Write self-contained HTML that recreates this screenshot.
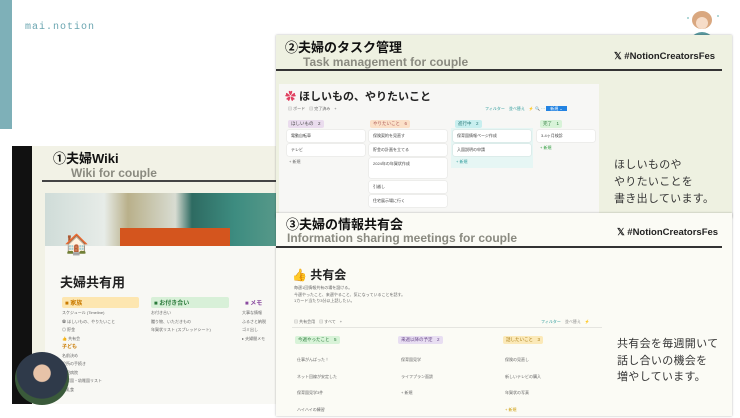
<!DOCTYPE html>
<html><head><meta charset="utf-8"><style>
*{margin:0;padding:0;box-sizing:border-box}
body{width:740px;height:416px;overflow:hidden;background:#fff;position:relative;font-family:"Liberation Sans","Noto Sans CJK JP",sans-serif;color:#222}
.a{position:absolute}
.s{font-size:4px;color:#666;white-space:nowrap}
.tag{font-size:4.5px;padding:1px 3px;border-radius:2px;white-space:nowrap}
.card{position:absolute;background:#fff;border-radius:2px;box-shadow:0 0 1px rgba(0,0,0,.25);font-size:4px;color:#444;padding:3px 4px;white-space:nowrap}
</style></head><body>
<div class="a" style="left:0;top:0;width:12px;height:129px;background:#7eb0b8"></div>
<div class="a" style="left:25px;top:22px;font-size:10px;color:#6aa5b0;letter-spacing:1px;font-family:'Liberation Mono',monospace">mai.notion</div>
<svg class="a" style="left:680px;top:8px" width="50" height="30"><ellipse cx="22" cy="12" rx="10" ry="9" fill="#d9a77f"/><ellipse cx="22" cy="15" rx="6" ry="6" fill="#f6dcc8"/><path d="M10 30 Q22 18 34 30Z" fill="#5b9aa0"/><circle cx="8" cy="10" r="1" fill="#9cc"/><circle cx="38" cy="8" r="1" fill="#9cc"/></svg>

<!-- Slide 1 -->
<div class="a" style="left:12px;top:146px;width:270px;height:258px;background:#111"></div>
<div class="a" style="left:32px;top:146px;width:250px;height:258px;background:#f2f2e6"></div>
<div class="a" style="left:53px;top:148px;font-size:13px;font-weight:bold;color:#111">①夫婦Wiki</div>
<div class="a" style="left:71px;top:166px;font-size:12px;font-weight:bold;color:#8a8a80">Wiki for couple</div>
<div class="a" style="left:42px;top:180px;width:240px;height:2px;background:#444"></div>
<div class="a" style="left:45px;top:193px;width:237px;height:54px;background:linear-gradient(90deg,#cfdcd8 0,#e7ece8 25%,#b9b08a 35%,#d8dcd2 55%,#2e6b62 62%,#3d8c80 80%,#5a9a8a 100%)"></div>
<div class="a" style="left:120px;top:228px;width:110px;height:18px;background:#d4551e"></div>
<div class="a" style="left:45px;top:246px;width:237px;height:158px;background:#f8f8f4"></div>
<div class="a" style="left:64px;top:232px;font-size:20px">🏠</div>
<div class="a" style="left:60px;top:272px;font-size:13px;font-weight:bold">夫婦共有用</div>
<div class="a tag" style="left:62px;top:297px;width:77px;background:#fde6b0;color:#c97a00;font-weight:bold;font-size:6px">■ 家族</div>
<div class="a tag" style="left:151px;top:297px;width:78px;background:#d8f0d8;color:#2a7a3a;font-weight:bold;font-size:6px">■ お付き合い</div>
<div class="a tag" style="left:242px;top:297px;width:40px;color:#8a4aa0;font-weight:bold;font-size:6px">■ メモ</div>
<div class="a s" style="left:62px;top:309px;line-height:8.5px">スケジュール (Timeline)<br>✿ ほしいもの、やりたいこと<br>◎ 貯金<br>👍 共有会<br><b style="color:#c97a00;font-size:5px">子ども</b><br>名前決め<br>役所の手続き<br>小児病院<br>保育園・幼稚園リスト<br>離乳食</div>
<div class="a s" style="left:151px;top:309px;line-height:8.5px">お付き合い<br>贈り物、いただきもの<br>年賀状リスト (スプレッドシート)</div>
<div class="a s" style="left:242px;top:309px;line-height:8.5px">大事な情報<br>ふるさと納税<br>ゴミ出し<br>▸ 夫婦間メモ</div>
<div class="a" style="left:15px;top:352px;width:54px;height:53px;border-radius:50%;background:radial-gradient(circle at 50% 40%,#e7c3a8 0 20%,#2f3a4a 22% 60%,#3a5a3a 62%)"></div>

<!-- Slide 2 -->
<div class="a" style="left:276px;top:35px;width:456px;height:183px;background:#eef1e1;box-shadow:0 0 2px rgba(0,0,0,.3)"></div>
<div class="a" style="left:285px;top:37px;font-size:13px;font-weight:bold;color:#111">②夫婦のタスク管理</div>
<div class="a" style="left:303px;top:55px;font-size:12px;font-weight:bold;color:#8a8a80">Task management for couple</div>
<div class="a" style="left:276px;top:69px;width:446px;height:2px;background:#333"></div>
<div class="a" style="left:614px;top:51px;font-size:9.5px;font-weight:bold;color:#222">𝕏 #NotionCreatorsFes</div>
<div class="a" style="left:279px;top:84px;width:320px;height:134px;background:#f7f7f5"></div>
<div class="a" style="left:285px;top:88px;font-size:11px;font-weight:bold;color:#222"><span style="color:#e04060">✿</span> ほしいもの、やりたいこと</div>
<div class="a s" style="left:288px;top:106px">▤ ボード　▤ 完了済み　+</div>
<div class="a s" style="left:485px;top:106px;color:#2a9a9a">フィルター　並べ替え　⚡ 🔍 ··· <span style="background:#2383e2;color:#fff;padding:0 4px">新規 ⌄</span></div>
<div class="a tag" style="left:288px;top:120px;background:#eadcee;color:#444">ほしいもの　2</div>
<div class="a tag" style="left:370px;top:120px;background:#fbe0c8;color:#a55">やりたいこと　6</div>
<div class="a tag" style="left:455px;top:120px;background:#c8efef;color:#2a7a7a">進行中　2</div>
<div class="a tag" style="left:540px;top:120px;background:#d8f3d8;color:#2a7a3a">完了　1</div>
<div class="card" style="left:287px;top:130px;width:78px">電動自転車</div>
<div class="card" style="left:287px;top:144px;width:78px">テレビ</div>
<div class="a s" style="left:289px;top:159px">+ 新規</div>
<div class="card" style="left:369px;top:130px;width:78px">保険契約を見直す</div>
<div class="card" style="left:369px;top:144px;width:78px">貯金の計画を立てる</div>
<div class="card" style="left:369px;top:158px;width:78px;height:20px">2024年の年賀状作成</div>
<div class="card" style="left:369px;top:181px;width:78px">引越し</div>
<div class="card" style="left:369px;top:195px;width:78px">住宅展示場に行く</div>
<div class="a" style="left:451px;top:128px;width:82px;height:40px;background:#e6f6f4"></div>
<div class="card" style="left:453px;top:130px;width:78px">保育園情報ページ作成</div>
<div class="card" style="left:453px;top:144px;width:78px">入園説明の申請</div>
<div class="a s" style="left:456px;top:159px;color:#2a9a9a">+ 新規</div>
<div class="card" style="left:537px;top:130px;width:58px">3-4ヶ月検診</div>
<div class="a s" style="left:540px;top:145px;color:#2a9a3a">+ 新規</div>
<div class="a" style="left:614px;top:157px;font-size:11px;letter-spacing:0.3px;line-height:17px;color:#333">ほしいものや<br>やりたいことを<br>書き出しています。</div>

<!-- Slide 3 -->
<div class="a" style="left:276px;top:213px;width:456px;height:203px;background:#fbfbf5;box-shadow:0 0 2px rgba(0,0,0,.3)"></div>
<div class="a" style="left:286px;top:214px;font-size:13px;font-weight:bold;color:#111">③夫婦の情報共有会</div>
<div class="a" style="left:287px;top:231px;font-size:12px;font-weight:bold;color:#8a8a80">Information sharing meetings for couple</div>
<div class="a" style="left:276px;top:246px;width:446px;height:1.5px;background:#333"></div>
<div class="a" style="left:617px;top:227px;font-size:9.5px;font-weight:bold;color:#222">𝕏 #NotionCreatorsFes</div>
<div class="a" style="left:292px;top:266px;font-size:12px;font-weight:bold">👍 共有会</div>
<div class="a s" style="left:294px;top:285px;line-height:6.5px">毎週1回情報共有の場を設ける。<br>今週やったこと、来週やること、気になっていることを話す。<br>1カード当たり3分以上話したい。</div>
<div class="a s" style="left:294px;top:319px">▤ 共有会用　▤ すべて　+</div>
<div class="a" style="left:292px;top:327px;width:310px;height:1px;background:#e5e5e0"></div>
<div class="a s" style="left:541px;top:319px;color:#2a9a9a">フィルター　<span style="color:#888">並べ替え　⚡</span></div>
<div class="a tag" style="left:295px;top:336px;background:#d8f3d8;color:#2a7a3a">今週やったこと　5</div>
<div class="a tag" style="left:398px;top:336px;background:#e8def2;color:#6a4a8a">来週以降の予定　2</div>
<div class="a tag" style="left:503px;top:336px;background:#fbe9b8;color:#a77a10">話したいこと　3</div>
<div class="a s" style="left:297px;top:352px;line-height:16.5px">仕事がんばった！<br>ネット回線が安定した<br>保育園見学3件<br>ハイハイの練習</div>
<div class="a s" style="left:401px;top:352px;line-height:16.5px">保育園見学<br>ライフプラン面談<br>+ 新規</div>
<div class="a s" style="left:505px;top:352px;line-height:16.5px">保険の見直し<br>新しいテレビの購入<br>年賀状の写真<br><span style="color:#c90">+ 新規</span></div>
<div class="a" style="left:617px;top:336px;font-size:11px;letter-spacing:0.3px;line-height:16.5px;color:#333">共有会を毎週開いて<br>話し合いの機会を<br>増やしています。</div>
</body></html>
